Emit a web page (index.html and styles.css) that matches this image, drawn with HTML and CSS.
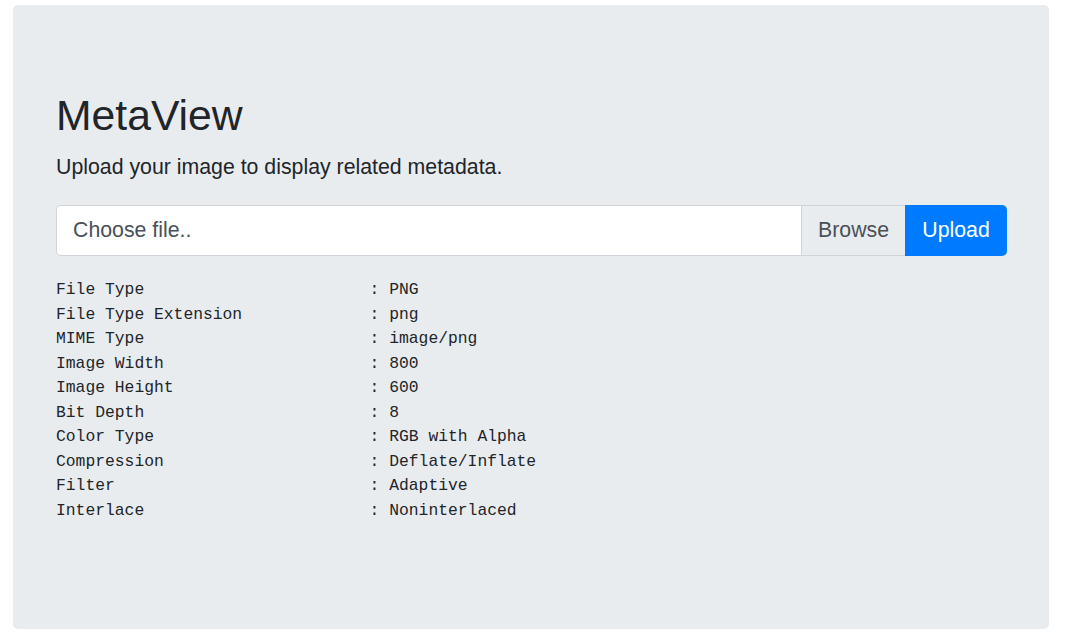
FILE: index.html
```html
<!DOCTYPE html>
<html lang="en">
<head>
<meta charset="utf-8">
<title>MetaView</title>
<link rel="stylesheet" href="styles.css">
</head>
<body>
<div class="jumbotron">
  <h1 class="title">MetaView</h1>
  <p class="lead">Upload your image to display related metadata.</p>
  <div class="input-group">
    <div class="file-field">
      <span class="file-label">Choose file..</span>
      <span class="browse">Browse</span>
    </div>
    <button class="upload" type="button">Upload</button>
  </div>
  <div class="meta">
    <div class="k">File Type</div><div class="v">: PNG</div>
    <div class="k">File Type Extension</div><div class="v">: png</div>
    <div class="k">MIME Type</div><div class="v">: image/png</div>
    <div class="k">Image Width</div><div class="v">: 800</div>
    <div class="k">Image Height</div><div class="v">: 600</div>
    <div class="k">Bit Depth</div><div class="v">: 8</div>
    <div class="k">Color Type</div><div class="v">: RGB with Alpha</div>
    <div class="k">Compression</div><div class="v">: Deflate/Inflate</div>
    <div class="k">Filter</div><div class="v">: Adaptive</div>
    <div class="k">Interlace</div><div class="v">: Noninterlaced</div>
  </div>
</div>
</body>
</html>
```

FILE: styles.css
```css
* { box-sizing: border-box; }
html, body { margin: 0; padding: 0; background: #fff; }
body {
  font-family: "Liberation Sans", Arial, sans-serif;
  color: #212529;
}
.jumbotron {
  margin: 5px 29px 5px 13px;
  height: 624px;
  background: #e9ecef;
  border-radius: 5px;
  padding: 85px 42px 0 43px;
}
.title {
  margin: 0;
  font-size: 42.7px;
  font-weight: 400;
  line-height: 1.2;
}
.lead {
  margin: 10px 0 0;
  font-size: 21.3px;
  line-height: 32px;
}
.input-group {
  margin-top: 22px;
  display: flex;
  height: 51px;
}
.file-field {
  flex: 1;
  display: flex;
  background: #fff;
  border: 1px solid #ced4da;
  border-right: 0;
  border-radius: 5px 0 0 5px;
  overflow: hidden;
}
.file-label {
  flex: 1;
  display: flex;
  align-items: center;
  padding: 0 16px;
  font-size: 21.3px;
  color: #495057;
}
.browse {
  width: 104px;
  display: flex;
  align-items: center;
  justify-content: center;
  background: #e9ecef;
  border-left: 1px solid #ced4da;
  font-size: 21.3px;
  color: #495057;
}
.upload {
  width: 102px;
  border: 0;
  margin: 0;
  padding: 0;
  background: #007bff;
  color: #fff;
  font-family: "Liberation Sans", Arial, sans-serif;
  font-size: 21.3px;
  border-radius: 0 5px 5px 0;
}
.meta {
  margin-top: 22px;
  display: grid;
  grid-template-columns: 313.6px auto;
  font-family: "Liberation Mono", "Courier New", monospace;
  font-size: 16.33px;
  line-height: 24.5px;
  color: #212529;
  white-space: pre;
}
```
